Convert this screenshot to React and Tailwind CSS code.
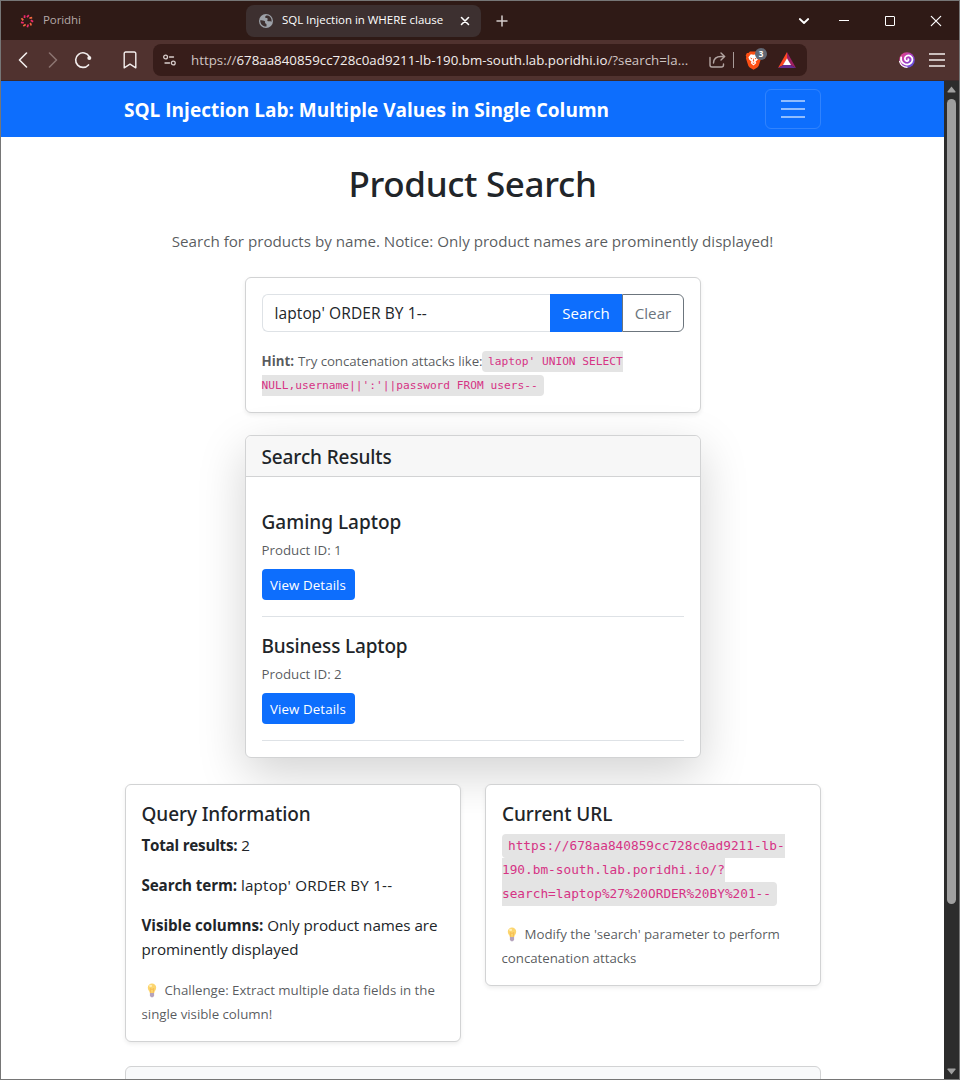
const stroke = {
  fill: "none",
  stroke: "currentColor",
  strokeLinecap: "round",
  strokeLinejoin: "round",
};

const DOTS = Array.from({ length: 9 }, (_, i) => (i * 2 * Math.PI) / 9);

function PoridhiLogo() {
  return (
    <svg width="14" height="14" viewBox="0 0 14 14" className="shrink-0">
      {DOTS.map((a, i) => (
        <line
          key={i}
          x1={7 + 3.8 * Math.sin(a)}
          y1={7 - 3.8 * Math.cos(a)}
          x2={7 + 6.2 * Math.sin(a + 0.3)}
          y2={7 - 6.2 * Math.cos(a + 0.3)}
          stroke={i % 2 ? "#f4693f" : "#f02a6c"}
          strokeWidth="1.700"
        />
      ))}
    </svg>
  );
}

function Globe() {
  return (
    <svg width="14" height="14" viewBox="0 0 14 14" className="shrink-0">
      <circle cx="7" cy="7" r="7" fill="#9da1a8" />
      <path
        d="M1.2 6.2c1.8.1 3.9.2 4.7 1 .6.7-.2 1.400.3 2.100.5.6 1.300.4 1.300 1.300v1.900C4 12.800 1.100 10.200 1.200 6.200zM7.200 1.500c-.9.7-1.300 1.500-.8 2.200.6.8 1.900.1 2.300 1.100.4.9-.9 1.300-.2 2.100.8.800 2.700-.1 4.100.900.3-2.400-.8-5.300-3.500-6.200z"
        fill="#3d3030"
      />
    </svg>
  );
}

function BraveLion() {
  return (
    <svg width="17" height="19" viewBox="0 0 17 19">
      <path d="M5 .5h7l1.600 1.600 1.500-.1 1.200 2.500-.6 1.600.4 1.200-2.300 7.200c-.3.900-.8 1.400-1.500 1.900L8.500 18.700 4.700 16.400c-.7-.5-1.200-1-1.500-1.900L.9 7.300l.4-1.200-.6-1.600L1.900 2l1.500.1z" fill="#fb4f14" />
      <path d="M5.800 3.300l2.700.5 2.700-.5 2.400 3-.8 2.200-2.400 2.300.9 1.300-2.800 2.500-2.800-2.500.9-1.300-2.400-2.300-.8-2.200z" fill="#fff" />
      <path d="M4.900 6.600l2.300.7-.4 1.300zM12.100 6.600l-2.300.7.4 1.300zM8.500 7l.8 3-.8.7-.8-.7zM6.900 11.800h3.200l-1.600 1.100z" fill="#fb4f14" />
    </svg>
  );
}

function BatTriangle() {
  return (
    <svg width="18" height="16" viewBox="0 0 18 16" className="shrink-0">
      <path d="M9 0L0 16l5.300-3L9 6.500z" fill="#ff4724" />
      <path d="M9 0l9 16-5.300-3L9 6.500z" fill="#9e1f63" />
      <path d="M0 16h18l-5.300-3H5.300z" fill="#662d91" />
      <path d="M9 6.300L5 13h8z" fill="#fff" />
    </svg>
  );
}

function Swirl() {
  return (
    <svg width="16" height="16" viewBox="0 0 17 17" className="shrink-0">
      <defs>
        <linearGradient id="swirl" x1="0" y1="0" x2="1" y2="1">
          <stop offset="0" stopColor="#f0457a" />
          <stop offset=".5" stopColor="#a73bc0" />
          <stop offset="1" stopColor="#4458e8" />
        </linearGradient>
      </defs>
      <circle cx="8.500" cy="8.500" r="8.300" fill="url(#swirl)" />
      <path
        d="M9.800 7.600c.8.900-.2 2.300-1.600 2C5.600 9 5.500 5.500 8 4.200c3.200-1.600 6.600.9 6.300 4.300-.4 3.800-4.700 5.800-8.300 4.300C3.300 11.600 1.700 8.800 2.300 5.700"
        fill="none"
        stroke="#fff"
        strokeWidth="1.900"
        strokeLinecap="round"
      />
      <path d="M.5 9.500c.8 3.600 4 6.700 8.500 6.800" fill="none" stroke="#fff" strokeWidth="1.200" />
    </svg>
  );
}

function Bulb() {
  return (
    <svg width="10" height="15" viewBox="0 0 10 15" className="ml-[5px] mr-[8px] inline-block align-[-3px]">
      <path d="M5 .5a4.200 4.200 0 0 1 4.200 4.200c0 2.300-1.700 3-2 5.300H2.800c-.3-2.300-2-3-2-5.300A4.200 4.200 0 0 1 5 .5z" fill="#fcd56f" />
      <path d="M3.800 10L3.200 5.500l1.800 1 1.800-1L6.200 10" fill="none" stroke="#f5b74e" strokeWidth=".8" />
      <ellipse cx="3.600" cy="2.900" rx="1.500" ry="1.100" fill="#fff0b8" />
      <path d="M2.900 10h4.200v2.800L6 14.300H4l-1.100-1.500z" fill="#b5a3bd" />
    </svg>
  );
}

function TabStrip() {
  return (
    <div className="flex h-[39px] items-center bg-[#2f1a16] text-[11.5px]">
      <div className="flex w-[245px] items-center gap-[9px] pl-[19px] text-[#b5a9a6]">
        <PoridhiLogo />
        <span className="-mt-[2px] tracking-[-0.1px]">Poridhi</span>
      </div>
      <div className="flex h-8 w-[235px] items-center rounded-lg bg-[#3d3030] pl-[13px] text-white">
        <Globe />
        <span className="-mt-[2px] ml-[9px] w-[178px] whitespace-nowrap tracking-[-0.03px]">SQL Injection in WHERE clause</span>
        <svg width="10" height="10" viewBox="0 0 10 10" strokeWidth="1.600" {...stroke}>
          <path d="M1.500 1.500l7 7M8.500 1.500l-7 7" />
        </svg>
      </div>
      <svg width="12" height="12" viewBox="0 0 12 12" className="ml-[15px] text-[#d5cdcb]" strokeWidth="1.500" {...stroke}>
        <path d="M6 1v10M1 6h10" />
      </svg>
      <div className="ml-auto flex items-center text-white">
        <svg width="12" height="12" viewBox="0 0 12 12" className="mr-[29px]" strokeWidth="1.800" {...stroke}>
          <path d="M1.800 4l4.200 4 4.200-4" />
        </svg>
        <svg width="10" height="12" viewBox="0 0 10 12" className="mr-[36px]" strokeWidth="1" {...stroke}>
          <path d="M0 5.500h10" />
        </svg>
        <svg width="10" height="10" viewBox="0 0 10 10" className="mr-[35px]" strokeWidth="1" {...stroke}>
          <rect x=".5" y=".5" width="9" height="9" rx=".5" />
        </svg>
        <svg width="12" height="12" viewBox="0 0 12 12" className="mr-[17px]" strokeWidth="1.200" {...stroke}>
          <path d="M1.300 1.300l9.400 9.400M10.700 1.300l-9.400 9.400" />
        </svg>
      </div>
    </div>
  );
}

function Toolbar() {
  return (
    <div className="flex h-[41px] items-center border-b border-[#3c2a2b] bg-[#50322f] text-[#f3eeed]">
      <svg width="10" height="16" viewBox="0 0 10 16" className="ml-[17px]" strokeWidth="1.600" {...stroke}>
        <path d="M8.500 1L1.500 8l7 7" />
      </svg>
      <svg width="10" height="16" viewBox="0 0 10 16" className="ml-[20px] text-[#8b7370]" strokeWidth="1.600" {...stroke}>
        <path d="M1.500 1l7 7-7 7" />
      </svg>
      <svg width="18" height="18" viewBox="0 0 18 18" className="ml-[16px]" strokeWidth="1.600" {...stroke}>
        <path d="M15.200 5.300A7.300 7.300 0 1 0 14.500 13.900" />
        <circle cx="15.300" cy="7" r="2" fill="currentColor" stroke="none" />
      </svg>
      <svg width="14" height="18" viewBox="0 0 14 18" className="ml-[31px]" strokeWidth="1.400" {...stroke}>
        <path d="M1.200 16.800V2.600A1.500 1.500 0 0 1 2.700 1h8.600a1.500 1.500 0 0 1 1.500 1.600v14.200L7 13.200z" />
      </svg>
      <div className="ml-[16px] flex h-8 w-[654px] items-center rounded-lg bg-[#371d1a] pl-[10px]">
        <svg width="13" height="12" viewBox="0 0 13 12" className="text-[#d9cecc]" strokeWidth="1.300" {...stroke}>
          <circle cx="2.600" cy="3" r="1.900" />
          <path d="M6.500 3h4" />
          <circle cx="10.300" cy="9" r="1.900" />
          <path d="M2 9h4.500" />
        </svg>
        <span className="ml-[15px] mt-px w-[518px] whitespace-nowrap text-[13.3px] tracking-[0.01px] text-[#f3eeed]">
          <span className="text-[#d0c4c2]">https://</span>678aa840859cc728c0ad9211-lb-190.bm-south.lab.poridhi.io
          <span className="text-[#d0c4c2]">/?search=la...</span>
        </span>
        <svg width="17" height="16" viewBox="0 0 17 16" className="mr-[7px] shrink-0 text-[#b3a5a2]" strokeWidth="1.400" {...stroke}>
          <path d="M1 5.500v7.500a2 2 0 0 0 2 2h9.500a2 2 0 0 0 2-2V12" />
          <path d="M4.500 11c.2-4.300 2.700-6.500 7.500-6.500h3.500M12 1l3.700 3.500L12 8" />
        </svg>
        <div className="h-4 w-px bg-[#a89b98]" />
        <div className="relative ml-[11px] h-[19px] w-[17px] shrink-0">
          <BraveLion />
          <span className="absolute left-[10px] top-[-3px] flex h-3 w-3 items-center justify-center rounded-full bg-[#626874] text-[8px] font-bold leading-none text-white">
            3
          </span>
        </div>
        <div className="ml-[16px]">
          <BatTriangle />
        </div>
      </div>
      <div className="ml-auto mr-[14px] flex items-center gap-[14px]">
        <Swirl />
        <svg width="16" height="14" viewBox="0 0 16 14" strokeWidth="1.600" {...stroke} strokeLinecap="butt">
          <path d="M0 1h16M0 7h16M0 13h16" />
        </svg>
      </div>
    </div>
  );
}

function Product({ name, id, tracking }) {
  return (
    <div className="h-[124px] border-b border-[#dee2e6] pt-4">
      <h5 className={`h-7 font-['Noto_Sans',sans-serif] text-[19px] font-medium leading-[26px] ${tracking}`}>{name}</h5>
      <p className="mb-2 h-6 text-[13.3px] leading-[27px] text-[#212529bf]">Product ID: {id}</p>
      <button className="h-[31px] w-[93px] rounded-[4px] bg-[#0d6efd] text-[13.3px] leading-[33px] tracking-[0.1px] text-white">
        View Details
      </button>
    </div>
  );
}

function Scrollbar() {
  return (
    <div className="flex w-[15px] flex-col items-center bg-[#2c2c2c]">
      <svg width="9" height="7" viewBox="0 0 9 7" className="mt-[5px]">
        <path d="M4.500 .5L8.500 5.500a.7.700 0 0 1-.6 1H1.100a.7.700 0 0 1-.6-1z" fill="#9f9f9f" />
      </svg>
      <div className="mt-[6px] h-[805px] w-[9px] rounded-full bg-[#9f9f9f]" />
      <svg width="9" height="7" viewBox="0 0 9 7" className="mb-[4px] mt-auto">
        <path d="M4.500 6.500L.5 1.500a.7.700 0 0 1 .6-1h6.800a.7.700 0 0 1 .6 1z" fill="#9f9f9f" />
      </svg>
    </div>
  );
}

export default function App() {
  return (
    <div className="flex h-[1080px] w-[960px] flex-col overflow-hidden border border-[#767676] bg-white font-['Open_Sans',sans-serif] text-[#212529]">
      <TabStrip />
      <Toolbar />
      <div className="flex min-h-0 flex-1">
        <main className="w-[943px] overflow-hidden">
          <nav className="flex h-14 items-center justify-between bg-[#0d6efd] pl-[123px] pr-[123px]">
            <span className="whitespace-nowrap pt-[2px] text-[19px] font-bold leading-7 tracking-[0.01px] text-white">
              SQL Injection Lab: Multiple Values in Single Column
            </span>
            <button className="flex h-10 w-14 flex-col items-center justify-center gap-[6px] rounded-md border border-[#ffffff26]">
              <span className="h-[2px] w-6 bg-[#ffffff8c]" />
              <span className="h-[2px] w-6 bg-[#ffffff8c]" />
              <span className="h-[2px] w-6 bg-[#ffffff8c]" />
            </button>
          </nav>

          <div className="flex flex-col items-center pt-6">
            <h1 className="h-[43px] font-['Noto_Sans',sans-serif] text-[35px] font-medium leading-[46px] tracking-[-0.34px]">
              Product Search
            </h1>
            <p className="mt-[25px] h-6 whitespace-nowrap text-[15.2px] leading-6 tracking-[-0.02px] text-[#212529bf]">
              Search for products by name. Notice: Only product names are prominently displayed!
            </p>

            <section className="mt-6 h-[136px] w-[456px] rounded-md border border-[#d2d3d4] bg-white p-4 shadow-[0_2px_4px_rgba(0,0,0,0.075)]">
              <form className="flex h-[38px]">
                <div className="flex-1 rounded-l-md border border-r-0 border-[#dee2e6] pl-3 text-[15.5px] leading-[37px] tracking-[0.1px]">
                  laptop' ORDER BY 1--
                </div>
                <button type="button" className="w-[72px] bg-[#0d6efd] pl-px text-[15px] leading-[37px] text-white">
                  Search
                </button>
                <button
                  type="button"
                  className="w-[62px] rounded-r-md border border-[#6c757d] pl-px text-[15.2px] leading-[35px] text-[#6c757d]"
                >
                  Clear
                </button>
              </form>
              <div className="mt-4 whitespace-nowrap text-[13.3px] leading-6 text-[#212529bf]">
                <div className="flex h-6 items-center">
                  <strong className="mr-[4px] mt-[2px] font-bold">Hint:</strong>
                  <span className="mt-[2px] w-[184px] tracking-[-0.07px]">Try concatenation attacks like:</span>
                  <code className="mt-[3px] h-[21px] rounded-l bg-[#e4e4e4] pl-[6px] font-['DejaVu_Sans_Mono',monospace] text-[11.2px] leading-[22px] text-[#d63384]">
                    laptop' UNION SELECT
                  </code>
                </div>
                <div className="flex h-6 items-center">
                  <code className="mt-[3px] h-[21px] rounded-r bg-[#e4e4e4] pr-[6px] font-['DejaVu_Sans_Mono',monospace] text-[11.2px] leading-[22px] text-[#d63384]">
                    NULL,username||':'||password FROM users--
                  </code>
                </div>
              </div>
            </section>

            <section className="mt-[22px] h-[323px] w-[456px] rounded-md border border-[#d2d3d4] bg-white shadow-[0_16px_48px_rgba(0,0,0,0.175)]">
              <h5 className="h-[41px] rounded-t-md border-b border-[#d2d3d4] bg-[#f7f7f7] px-4 font-['Noto_Sans',sans-serif] text-[19px] font-medium leading-[43px] tracking-[-0.12px]">
                Search Results
              </h5>
              <div className="px-4 pt-4">
                <Product name="Gaming Laptop" id={1} tracking="tracking-[0px]" />
                <Product name="Business Laptop" id={2} tracking="tracking-[-0.16px]" />
              </div>
            </section>
          </div>

          <div className="mt-[26px] flex items-start gap-6 pl-[124px]">
            <section className="relative h-[258px] w-[336px] whitespace-nowrap rounded-md border border-[#d2d3d4] bg-white py-4 pl-[15.5px] text-[15.2px] leading-[25px] shadow-[0_2px_4px_rgba(0,0,0,0.075)]">
              <h5 className="mb-2 h-6 font-['Noto_Sans',sans-serif] text-[19px] font-medium leading-[26px] tracking-[-0.09px]">
                Query Information
              </h5>
              <p className="mb-4 h-6">
                <strong className="font-bold tracking-[-0.23px]">Total results:</strong> 2
              </p>
              <p className="mb-4 h-6">
                <strong className="font-bold tracking-[-0.12px]">Search term:</strong>{" "}
                <span className="tracking-[0.2px]">laptop' ORDER BY 1--</span>
              </p>
              <p className="mb-4 h-12 leading-6 tracking-[-0.04px]">
                <strong className="font-bold">Visible columns:</strong> Only product names are
                <br />
                prominently displayed
              </p>
              <p className="pt-px text-[13.3px] leading-6 tracking-[-0.03px] text-[#212529bf]">
                <Bulb />
                Challenge: Extract multiple data fields in the
                <br />
                single visible column!
              </p>
            </section>

            <section className="relative h-[202px] w-[336px] whitespace-nowrap rounded-md border border-[#d2d3d4] bg-white p-4 shadow-[0_2px_4px_rgba(0,0,0,0.075)]">
              <h5 className="mb-[9px] h-6 font-['Noto_Sans',sans-serif] text-[19px] font-medium leading-[26px] tracking-[-0.06px]">
                Current URL
              </h5>
              <div className="mb-[15px] flex flex-col items-start font-['DejaVu_Sans_Mono',monospace] text-[12.77px] leading-[23px] text-[#d63384]">
                <code className="h-6 rounded-l bg-[#e4e4e4] pl-[6px] font-[inherit]">
                  https://678aa840859cc728c0ad9211-lb-
                </code>
                <code className="h-6 bg-[#e4e4e4] font-[inherit]">190.bm-south.lab.poridhi.io/?</code>
                <code className="h-6 rounded-r bg-[#e4e4e4] pr-[6px] font-[inherit]">
                  search=laptop%27%20ORDER%20BY%201--
                </code>
              </div>
              <p className="-ml-[0.5px] pt-px text-[13.3px] leading-6 tracking-[-0.04px] text-[#212529bf]">
                <Bulb />
                Modify the 'search' parameter to perform
                <br />
                concatenation attacks
              </p>
            </section>
          </div>

          <div className="ml-[124px] mt-6 h-12 w-[696px] rounded-t-md border border-[#d2d3d4] bg-[#f8f9fa]" />
        </main>
        <Scrollbar />
      </div>
    </div>
  );
}
